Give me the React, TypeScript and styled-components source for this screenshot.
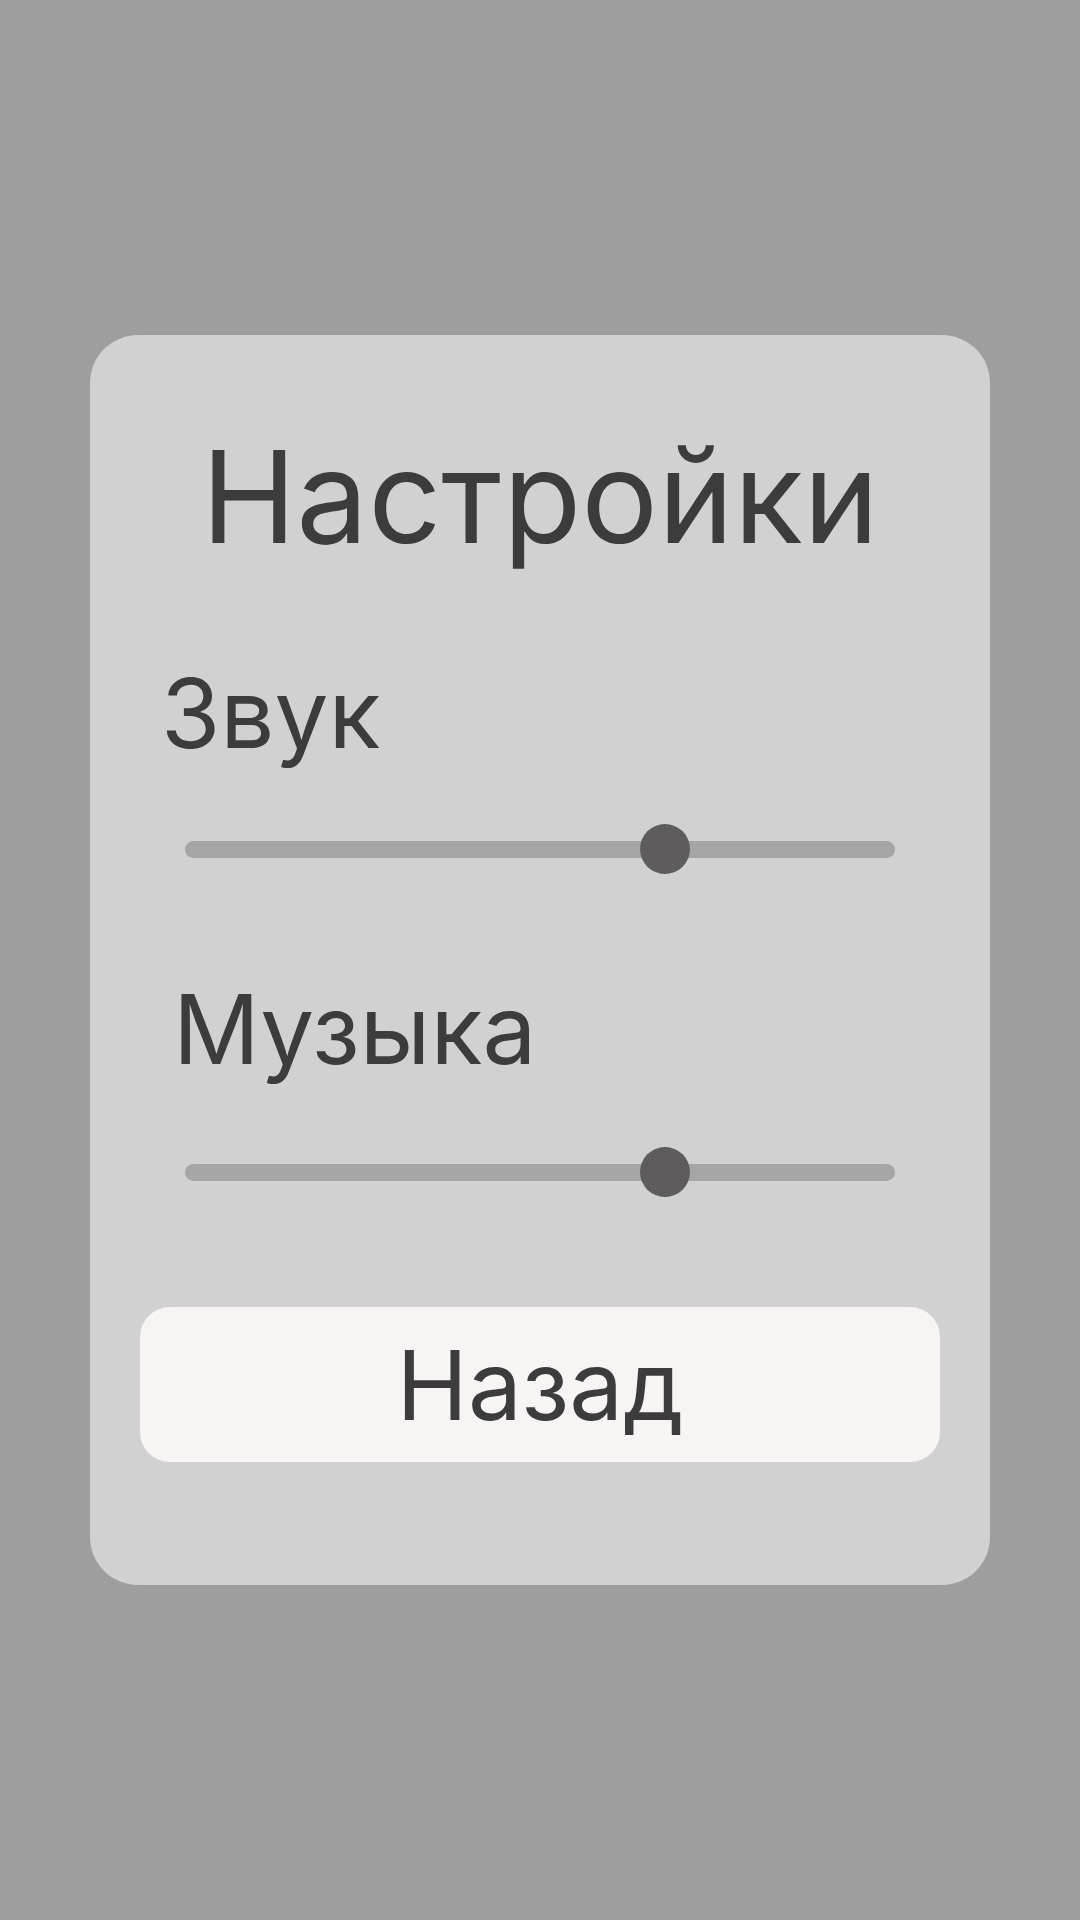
import React from "react";
import styled, { createGlobalStyle } from "styled-components";

const Global = createGlobalStyle`
  html, body { margin: 0; padding: 0; }
  body {
    background: #9e9e9e;
    font-family: Inter, "Noto Sans", "Liberation Sans", sans-serif;
  }
`;

const Page = styled.div`
  width: 1080px;
  height: 1920px;
  background: #9e9e9e;
  display: flex;
  flex-direction: column;
  align-items: center;
  padding-top: 335px;
  box-sizing: border-box;
`;

const Card = styled.div`
  width: 900px;
  height: 1250px;
  box-sizing: border-box;
  background: #d1d1d1;
  border-radius: 48px;
  padding: 98px 50px 0;
  display: flex;
  flex-direction: column;
`;

const Title = styled.h1`
  margin: 0;
  font-size: 128px;
  line-height: 1;
  font-weight: 400;
  color: #3c3c3c;
  text-align: center;
`;

const Label = styled.div<{ $top: number; $indent: number }>`
  margin-top: ${(p) => p.$top}px;
  padding-left: ${(p) => p.$indent}px;
  font-size: 96px;
  line-height: 1;
  color: #3c3c3c;
`;

const SliderRow = styled.div<{ $top: number }>`
  margin-top: ${(p) => p.$top}px;
  height: 50px;
  padding: 0 45px;
  display: flex;
  align-items: center;
`;

const Track = styled.div`
  position: relative;
  flex: 1;
  height: 17px;
  border-radius: 9px;
  background: #a5a5a5;
`;

const Thumb = styled.div`
  position: absolute;
  top: 50%;
  width: 50px;
  height: 50px;
  border-radius: 50%;
  background: #5e5c5d;
  transform: translate(-50%, -50%);
`;

const Button = styled.button`
  margin-top: 110px;
  height: 155px;
  border: none;
  border-radius: 30px;
  background: #f7f4f3;
  color: #3c3c3c;
  font-family: inherit;
  font-size: 96px;
  line-height: 1;
  padding: 0;
  display: flex;
  align-items: center;
  justify-content: center;
`;

const Slider: React.FC<{ value: number; top: number }> = ({ value, top }) => (
  <SliderRow $top={top}>
    <Track>
      <Thumb style={{ left: `${value * 100}%` }} />
    </Track>
  </SliderRow>
);

export default function App() {
  return (
    <Page>
      <Global />
      <Card>
        <Title>Настройки</Title>
        <Label $top={104} $indent={21}>Звук</Label>
        <Slider value={0.676} top={63} />
        <Label $top={107} $indent={33}>Музыка</Label>
        <Slider value={0.676} top={70} />
        <Button>Назад</Button>
      </Card>
    </Page>
  );
}
